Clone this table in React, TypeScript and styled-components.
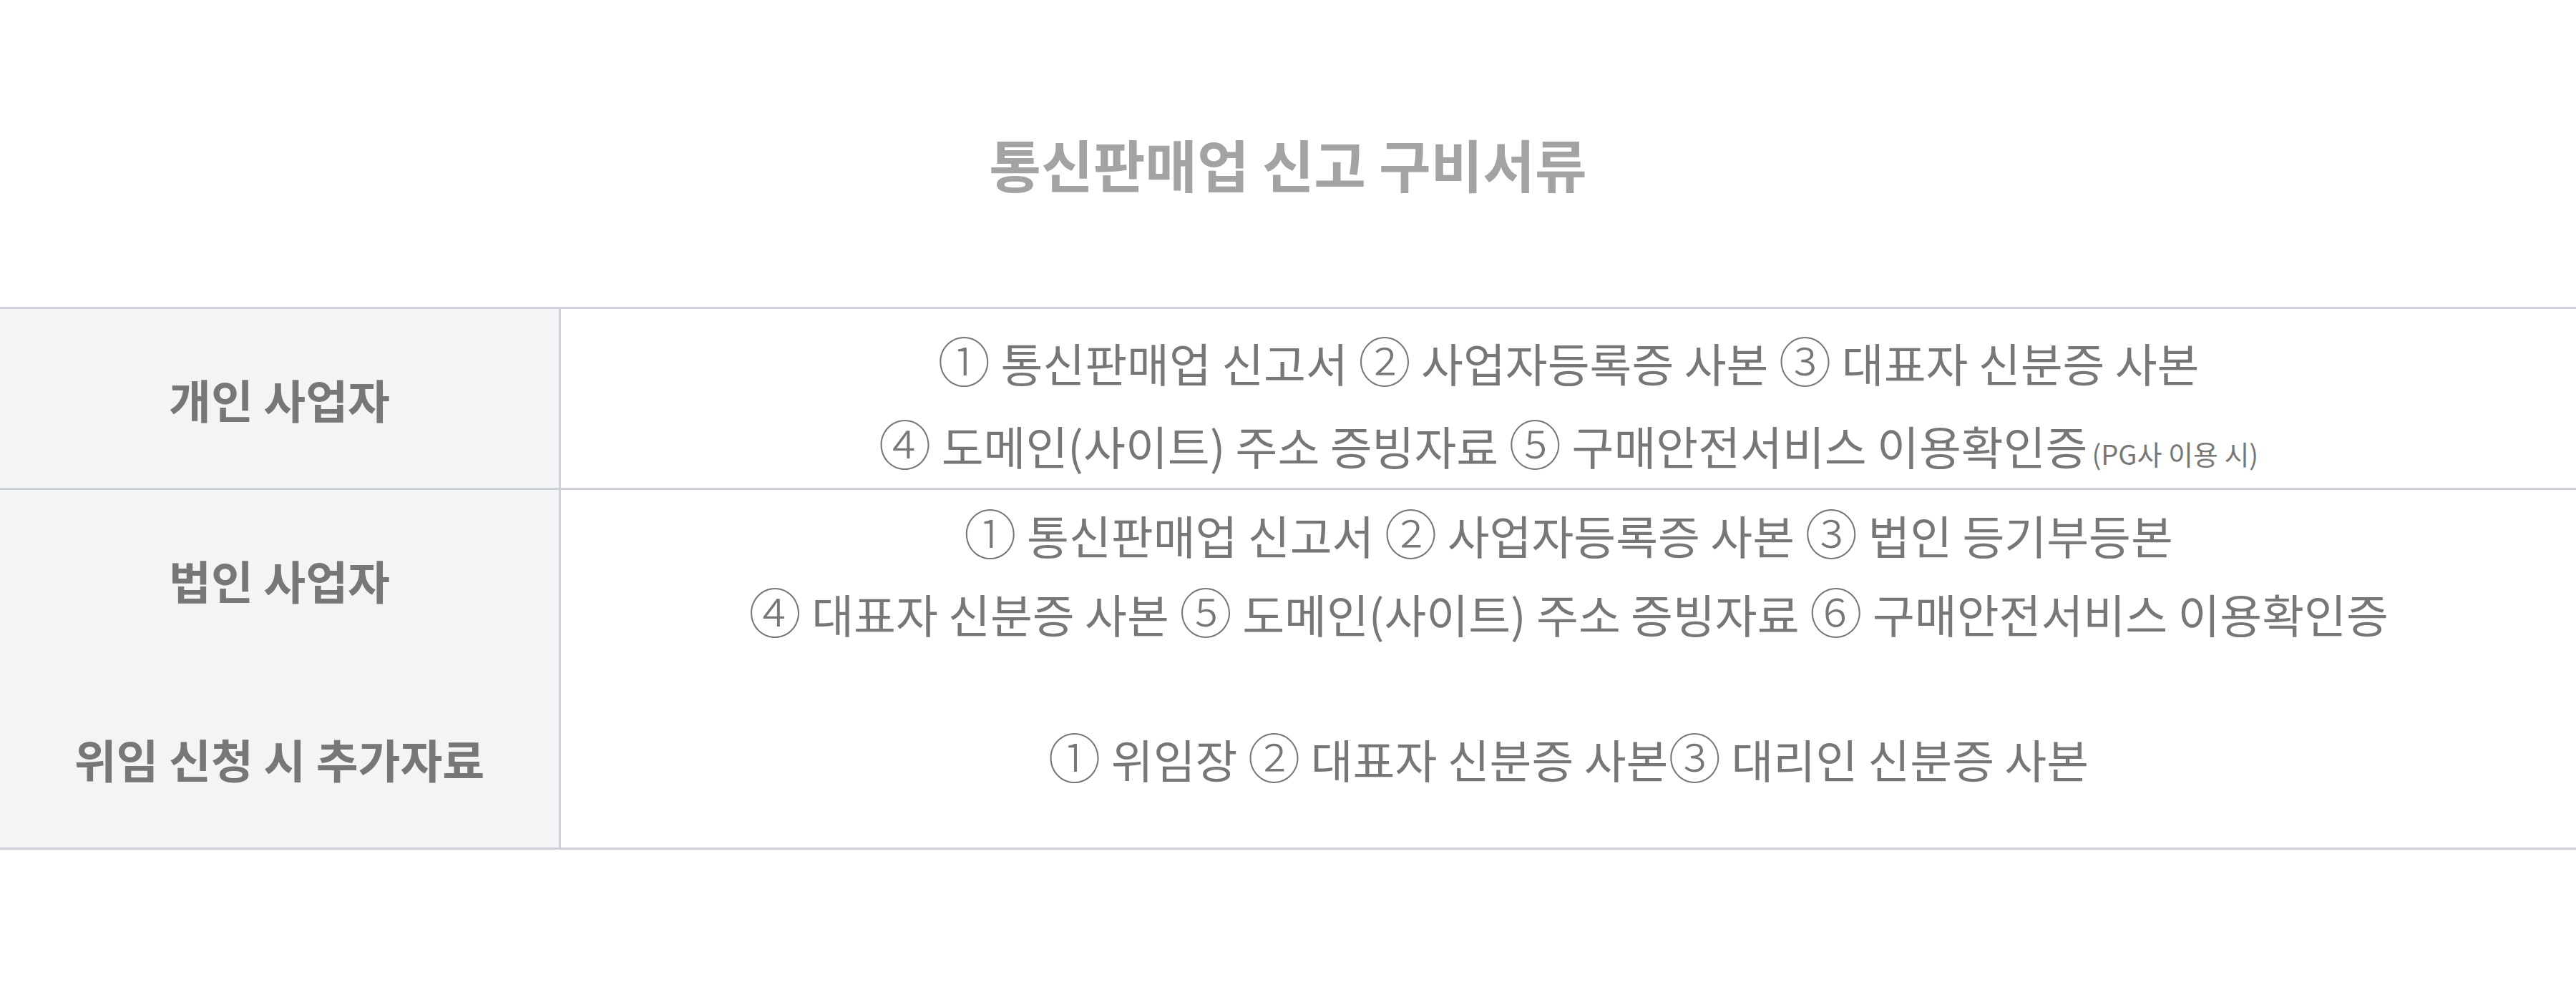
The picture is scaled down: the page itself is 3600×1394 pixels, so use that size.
import React from "react"
import styled, { createGlobalStyle } from "styled-components"

type Row = {
    label: string
    lines: { text: string; note?: string }[]
    divider: boolean
    lineHeight: number
    shift: number // 위(-) / 아래(+) 미세 조정
}

const rows: Row[] = [
    {
        label: "개인 사업자",
        lines: [
            { text: "① 통신판매업 신고서 ② 사업자등록증 사본 ③ 대표자 신분증 사본" },
            { text: "④ 도메인(사이트) 주소 증빙자료 ⑤ 구매안전서비스 이용확인증", note: "(PG사 이용 시)" },
        ],
        divider: true,
        lineHeight: 116,
        shift: 7,
    },
    {
        label: "법인 사업자",
        lines: [
            { text: "① 통신판매업 신고서 ② 사업자등록증 사본 ③ 법인 등기부등본" },
            { text: "④ 대표자 신분증 사본 ⑤ 도메인(사이트) 주소 증빙자료 ⑥ 구매안전서비스 이용확인증" },
        ],
        divider: false,
        lineHeight: 110,
        shift: -8,
    },
    {
        label: "위임 신청 시 추가자료",
        lines: [{ text: "① 위임장 ② 대표자 신분증 사본③ 대리인 신분증 사본" }],
        divider: false,
        lineHeight: 114,
        shift: 0,
    },
]

// 원문자(①~⑥)만 조금 크게
const withNumbers = (text: string) =>
    text.split(/([①-⑥])/).map((part, i) => (/^[①-⑥]$/.test(part) ? <SNum key={i}>{part}</SNum> : part))

const App = () => {
    return (
        <>
            <GlobalStyle />
            <SSection>
                <STitle>통신판매업 신고 구비서류</STitle>
                <STable>
                    {rows.map((row) => (
                        <SRow key={row.label} $divider={row.divider}>
                            <SLabel>{row.label}</SLabel>
                            <SContent $lineHeight={row.lineHeight} $shift={row.shift}>
                                {row.lines.map((line, i) => (
                                    <SLine key={i}>
                                        {withNumbers(line.text)}
                                        {line.note && <SNote>{line.note}</SNote>}
                                    </SLine>
                                ))}
                            </SContent>
                        </SRow>
                    ))}
                </STable>
            </SSection>
        </>
    )
}

export default App

const GlobalStyle = createGlobalStyle`
    body {
        margin: 0;
        background: #fff;
        font-family: "Noto Sans CJK KR", "Noto Sans", sans-serif;
    }
`

const SSection = styled.section`
    display: flex;
    flex-direction: column;
    align-items: center;
    width: 100%;
    padding-top: 181px;
`

const STitle = styled.h2`
    margin: 0 0 152px;
    font-size: 79px;
    font-weight: 600;
    line-height: 96px;
    color: #a3a3a3;
    text-align: center;
`

const STable = styled.div`
    width: 100%;
    border-top: 3px solid #cdd0d6;
    border-bottom: 3px solid #cdd0d6;
`

const SRow = styled.div<{ $divider: boolean }>`
    display: grid;
    grid-template-columns: 784px 1fr;
    height: 250px;
    border-bottom: ${({ $divider }) => ($divider ? "3px solid #cdd0d6" : "none")};
`

const SLabel = styled.div`
    display: flex;
    justify-content: center;
    align-items: center;
    background: #f3f4f6;
    border-right: 3px solid #cdd0d6;
    font-size: 64px;
    font-weight: 700;
    color: #777;
`

const SContent = styled.div<{ $lineHeight: number; $shift: number }>`
    display: flex;
    flex-direction: column;
    justify-content: center;
    align-items: center;
    padding-top: ${({ $shift }) => Math.max($shift, 0) * 2}px;
    padding-bottom: ${({ $shift }) => Math.max(-$shift, 0) * 2}px;
    font-size: 64px;
    font-weight: 400;
    line-height: ${({ $lineHeight }) => $lineHeight}px;
    color: #777;
`

const SLine = styled.p`
    margin: 0;
    white-space: nowrap;
`

const SNum = styled.span`
    font-size: 1.15em;
    font-weight: 300;
    line-height: 0;
`

const SNote = styled.span`
    margin-left: 6px;
    font-size: 38px;
    line-height: 0;
`
